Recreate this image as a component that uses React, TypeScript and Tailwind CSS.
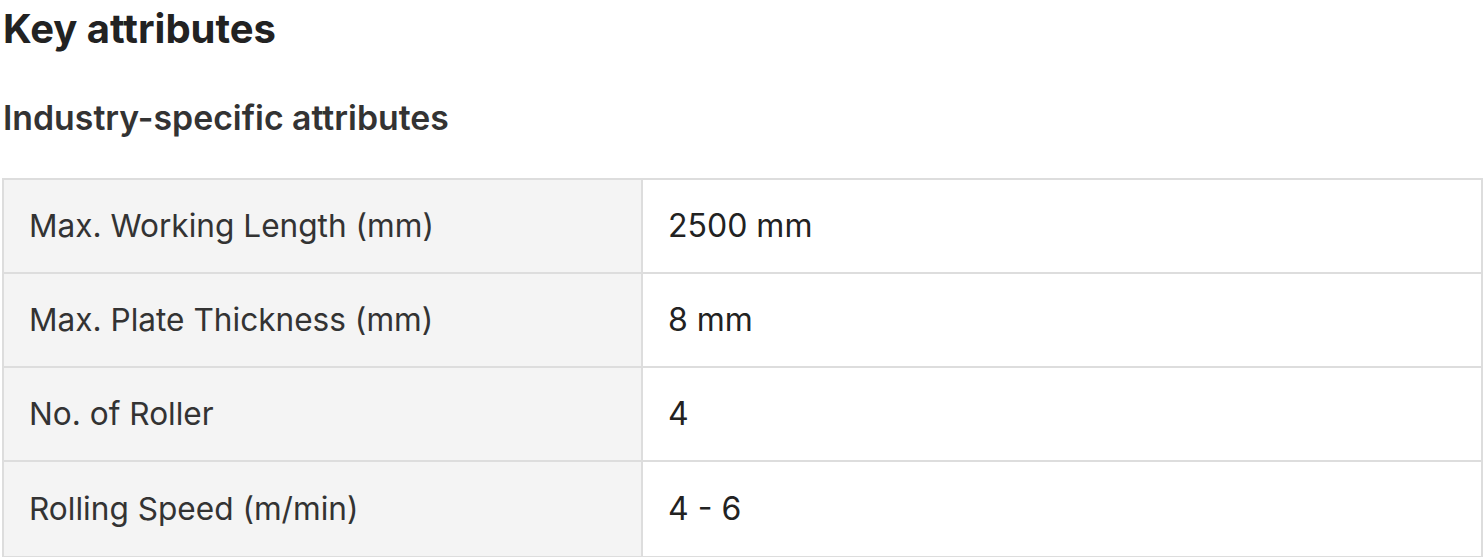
export default function App() {
  const rows = [
    ["Max. Working Length (mm)", "2500 mm"],
    ["Max. Plate Thickness (mm)", "8 mm"],
    ["No. of Roller", "4"],
    ["Rolling Speed (m/min)", "4 - 6"],
  ];
  return (
    <div className="bg-white w-[1483px] h-[557px] overflow-hidden" style={{ fontFamily: "Inter, 'Noto Sans', sans-serif" }}>
      <h1 className="pl-[3px] pt-[5px] text-[40px] leading-[48px] font-bold text-[#222]">Key attributes</h1>
      <h2 className="pl-[3px] mt-[45px] text-[33.8px] leading-[40px] font-semibold text-[#333]">Industry-specific attributes</h2>
      <div className="ml-[2px] mt-[40px] w-[1481px] border-2 border-[#ddd]">
        {rows.map(([k, v], i) => (
          <div key={i} className={`flex h-[94px] ${i < rows.length - 1 ? "border-b-2 border-[#ddd]" : ""}`}>
            <div className="w-[639px] shrink-0 border-r-2 border-[#ddd] bg-[#f4f4f4] flex items-center pl-[25px] text-[31.6px] text-[#333]">{k}</div>
            <div className="flex-1 flex items-center pl-[25px] text-[32px] text-[#222]">{v}</div>
          </div>
        ))}
      </div>
    </div>
  );
}
